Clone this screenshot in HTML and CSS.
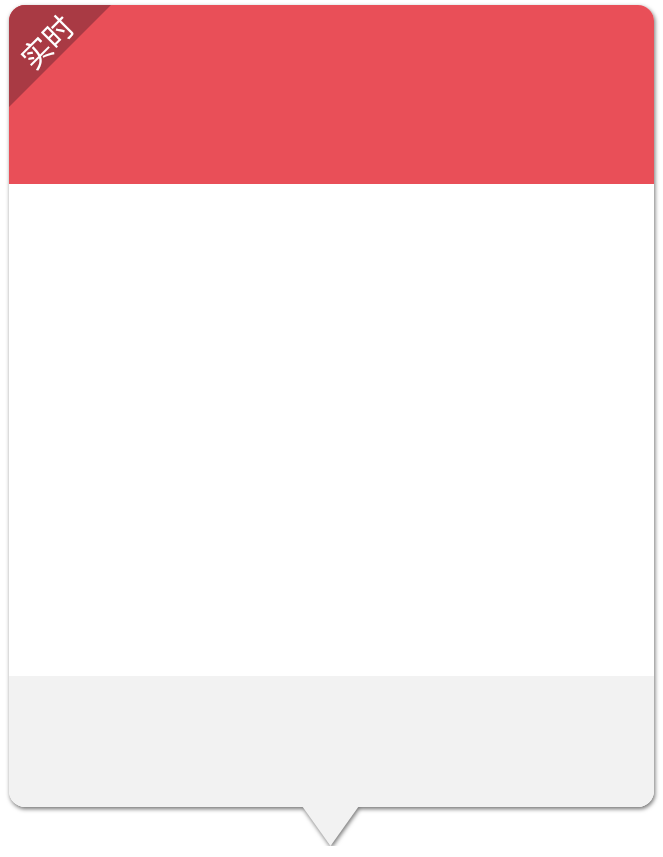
FILE: index.html
```html
<!DOCTYPE html>
<html lang="zh">
<head>
<meta charset="utf-8">
<link rel="stylesheet" href="styles.css">
</head>
<body>
<div class="popup">
  <div class="card">
    <div class="header">
      <div class="corner"></div>
      <span class="corner-text">实时</span>
    </div>
    <div class="content"></div>
    <div class="footer"></div>
  </div>
  <div class="pointer"></div>
</div>
</body>
</html>
```
FILE: styles.css
```css
html, body {
  margin: 0;
  padding: 0;
  background: #ffffff;
}
body {
  padding: 5px 9px 0 9px;
  font-family: "Noto Sans CJK SC", "Noto Sans", sans-serif;
}
.popup {
  width: 645px;
  display: flex;
  flex-direction: column;
  align-items: center;
  filter: drop-shadow(1px 2px 2px rgba(0, 0, 0, 0.55));
}
.card {
  width: 645px;
  height: 802px;
  border-radius: 16px;
  overflow: hidden;
  display: flex;
  flex-direction: column;
  background: #ffffff;
}
.header {
  height: 179px;
  background: #e94f58;
  position: relative;
  flex: none;
}
.corner {
  position: absolute;
  left: 0;
  top: 0;
  width: 102px;
  height: 102px;
  background: #a93a44;
  clip-path: polygon(0 0, 100% 0, 0 100%);
}
.corner-text {
  position: absolute;
  left: 3px;
  top: 19px;
  width: 68px;
  text-align: center;
  color: #ffffff;
  font-size: 30px;
  line-height: 34px;
  transform: rotate(-45deg);
}
.content {
  flex: 1;
  background: #ffffff;
}
.footer {
  height: 131px;
  background: #f2f2f2;
  flex: none;
}
.pointer {
  width: 57px;
  height: 40px;
  margin-top: -1px;
  margin-left: -2px;
  background: #f2f2f2;
  clip-path: polygon(0 0, 100% 0, 50% 100%);
}
```
